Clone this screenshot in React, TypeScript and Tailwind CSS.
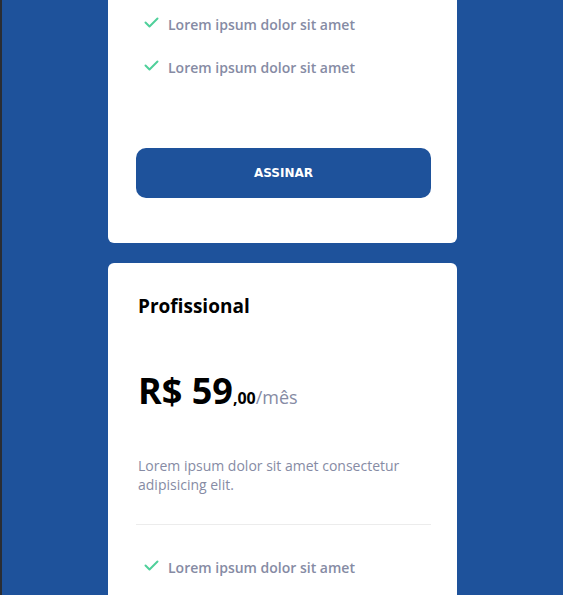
import React from 'react';

const features = ['Lorem ipsum dolor sit amet', 'Lorem ipsum dolor sit amet'];

function Check() {
  return (
    <svg width="15" height="11" viewBox="0 0 15 11" fill="none" className="mt-[2px] shrink-0">
      <path d="M1.5 5.5L5.5 9.5L13.5 1.5" stroke="#4fd09a" strokeWidth="2" strokeLinecap="round" strokeLinejoin="round" />
    </svg>
  );
}

function Feature({ text }: { text: string }) {
  return (
    <li className="flex items-start gap-[9px] pl-[8px]">
      <Check />
      <span className="text-[14px] font-semibold leading-[20px] text-[#868ba4]">{text}</span>
    </li>
  );
}

export default function App() {
  return (
    <div className="flex h-[595px] w-[563px] overflow-hidden bg-[#1e529b] font-['Open_Sans',sans-serif]">
      {/* left window edge */}
      <div className="w-[2px] shrink-0 bg-[#2a2d33]" />

      <div className="ml-[106px] flex w-[349px] flex-col gap-[20px]">
        {/* Basic plan, scrolled past its top */}
        <section className="rounded-b-[6px] bg-white pb-[45px] pl-[28px] pr-[26px] pt-[15px]">
          <ul className="flex flex-col gap-[23px]">
            {features.map((f, i) => (
              <Feature key={i} text={f} />
            ))}
          </ul>
          <button className="mt-[70px] flex h-[50px] w-[295px] items-center justify-center rounded-[10px] bg-[#1e529b] font-['DejaVu_Sans',sans-serif] text-[12px] font-bold text-white">
            ASSINAR
          </button>
        </section>

        {/* Professional plan */}
        <section className="flex-1 rounded-t-[6px] bg-white pl-[28px] pr-[26px] pt-[30px]">
          <h3 className="pl-[2px] text-[19px] font-bold leading-[26px] text-black">Profissional</h3>
          <p className="mt-[50px] pl-[2px] leading-[44px]">
            <span className="text-[36px] font-bold text-black">R$ 59</span>
            <span className="text-[16px] font-bold text-black">,00</span>
            <span className="text-[18px] text-[#868ba4]">/mês</span>
          </p>
          <p className="mt-[36px] pl-[2px] text-[14px] leading-[19px] text-[#868ba4]">
            Lorem ipsum dolor sit amet consectetur adipisicing elit.
          </p>
          <hr className="mt-[30px] border-t border-[#ececec]" />
          <ul className="mt-[33px] flex flex-col gap-[23px]">
            <Feature text="Lorem ipsum dolor sit amet" />
          </ul>
        </section>
      </div>
    </div>
  );
}
